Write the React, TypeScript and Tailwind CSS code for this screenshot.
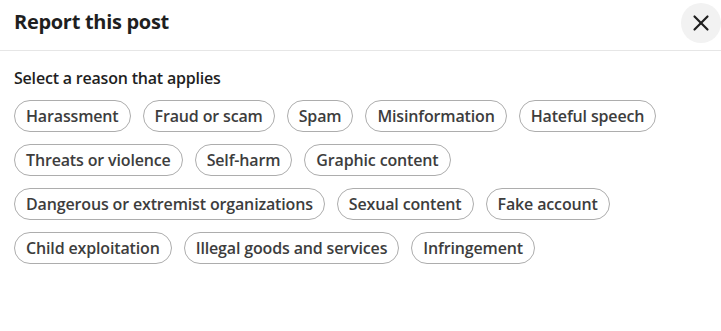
import { X } from 'lucide-react';

const reasons = [
  'Harassment',
  'Fraud or scam',
  'Spam',
  'Misinformation',
  'Hateful speech',
  'Threats or violence',
  'Self-harm',
  'Graphic content',
  'Dangerous or extremist organizations',
  'Sexual content',
  'Fake account',
  'Child exploitation',
  'Illegal goods and services',
  'Infringement',
];

export default function App() {
  return (
    <div className="w-[721px] h-[331px] bg-white font-['Open_Sans',sans-serif] text-[#1f1f1f]">
      <div className="flex items-start justify-between h-[51px] border-b border-[#e6e6e6] pl-[14px]">
        <h2 className="mt-[8px] text-[20px] leading-[28px] font-bold tracking-[-0.3px]">Report this post</h2>
        <button className="w-10 h-10 mt-[3px] rounded-full bg-[#f2f2f2] flex items-center justify-center">
          <X className="w-[26px] h-[26px] text-[#1f1f1f]" strokeWidth={2} />
        </button>
      </div>
      <div className="px-[14px] pt-[16px]">
        <p className="text-[16px] font-semibold leading-[22px] tracking-[-0.2px]">Select a reason that applies</p>
        <div className="mt-[11px] flex flex-wrap gap-[12px]">
          {reasons.map((r) => (
            <button
              key={r}
              className="h-[32px] px-[11px] rounded-full border border-[#adadad] text-[16px] font-semibold tracking-[-0.15px] text-[#3d3d3d] leading-none"
            >
              {r}
            </button>
          ))}
        </div>
      </div>
    </div>
  );
}
